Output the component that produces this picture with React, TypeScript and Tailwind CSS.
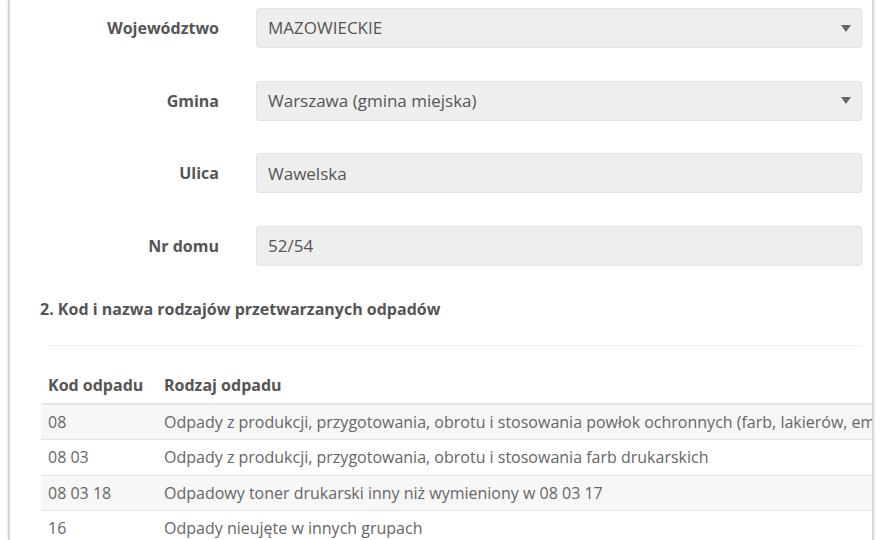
const fields: { label: string; value: string; select?: boolean }[] = [
  { label: 'Województwo', value: 'MAZOWIECKIE', select: true },
  { label: 'Gmina', value: 'Warszawa (gmina miejska)', select: true },
  { label: 'Ulica', value: 'Wawelska' },
  { label: 'Nr domu', value: '52/54' },
];

const rows = [
  { code: '08', name: 'Odpady z produkcji, przygotowania, obrotu i stosowania powłok ochronnych (farb, lakierów, emalii ceramicznych), kitów, klejów, szczeliw i farb drukarskich' },
  { code: '08 03', name: 'Odpady z produkcji, przygotowania, obrotu i stosowania farb drukarskich' },
  { code: '08 03 18', name: 'Odpadowy toner drukarski inny niż wymieniony w 08 03 17' },
  { code: '16', name: 'Odpady nieujęte w innych grupach' },
];

function Caret() {
  return (
    <svg width="10" height="7" viewBox="0 0 10 7" className="shrink-0">
      <path d="M0 0 H10 L5 7 Z" fill="#666" />
    </svg>
  );
}

export default function App() {
  return (
    <div
      className="w-[880px] h-[540px] overflow-hidden bg-white"
      style={{ fontFamily: '"Open Sans", "Noto Sans", sans-serif' }}
    >
      <div className="ml-[8px] w-[866px] h-full overflow-hidden border-x-2 border-[#d6d6d6] bg-white shadow-[0_0_3px_rgba(0,0,0,0.15)]">
        {/* address fields */}
        <div className="flex flex-col gap-[32.7px] pt-[8px]">
          {fields.map((f) => (
            <div key={f.label} className="flex items-center">
              <div className="w-[209px] text-right text-[16px] font-bold text-[#555]">{f.label}</div>
              <div className="ml-[37px] mr-[10px] flex h-[40px] flex-1 items-center justify-between rounded-[3px] border border-[#e3e3e3] bg-[#eeeeee] pl-[11px] pr-[10px] text-[17px] text-[#555]">
                <span>{f.value}</span>
                {f.select && <Caret />}
              </div>
            </div>
          ))}
        </div>

        <h3 className="mt-[31px] pl-[30px] text-[16px] font-bold text-[#555]">
          2. Kod i nazwa rodzajów przetwarzanych odpadów
        </h3>

        <div className="ml-[38px] mr-[10px] mt-[24px] border-t border-[#f2f2f2]" />

        {/* waste table */}
        <table className="ml-[31px] mt-[21px] w-[840px] table-fixed border-collapse text-[16px]">
          <colgroup>
            <col className="w-[116px]" />
            <col />
          </colgroup>
          <thead>
            <tr className="border-b-2 border-[#e6e6e6]">
              <th className="h-[37px] pl-[7px] text-left font-bold text-[#555]">Kod odpadu</th>
              <th className="pl-[7px] text-left font-bold text-[#555]">Rodzaj odpadu</th>
            </tr>
          </thead>
          <tbody>
            {rows.map((r, i) => (
              <tr key={r.code} className={`border-b border-[#e4e4e4] ${i % 2 === 0 ? 'bg-[#f7f7f7]' : 'bg-white'}`}>
                <td className="h-[35.5px] pl-[7px] text-[#666]">{r.code}</td>
                <td className="overflow-hidden whitespace-nowrap pl-[7px] text-[#666]">{r.name}</td>
              </tr>
            ))}
          </tbody>
        </table>
      </div>
    </div>
  );
}
